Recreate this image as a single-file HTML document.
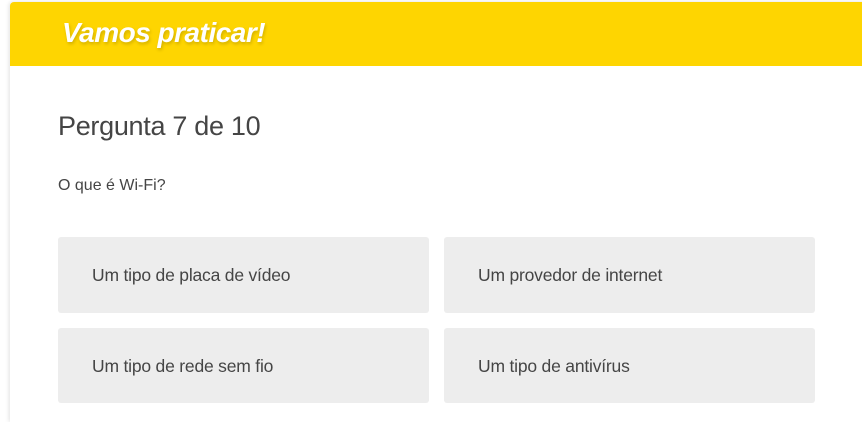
<!DOCTYPE html>
<html><head><meta charset="utf-8"><style>
html,body{margin:0;padding:0;background:#fff;width:862px;height:413px;overflow:hidden;font-family:"Liberation Sans",sans-serif;}
.card{position:absolute;left:10px;top:2px;width:860px;height:420px;background:#fff;border-radius:4px 0 0 0;box-shadow:-1px 0 4px rgba(0,0,0,0.12);overflow:hidden;}
.hdr{height:64px;background:#fed501;position:relative;}
.hdr span{position:absolute;left:52px;top:15px;font-size:28px;font-weight:bold;font-style:italic;color:#fff;text-shadow:1px 2px 3px rgba(0,0,0,0.18);letter-spacing:-0.5px;}
.q{position:absolute;left:48px;top:109px;font-size:27px;color:#454545;letter-spacing:-0.3px;}
.s{position:absolute;left:48px;top:175px;font-size:16px;color:#454545;}
.o{position:absolute;width:371px;height:76px;background:#ededed;border-radius:3px;}
.o span{position:absolute;left:34px;top:28px;font-size:17.5px;color:#454545;letter-spacing:-0.2px;}
</style></head><body>
<div class="card">
<div class="hdr"><span>Vamos praticar!</span></div>
<div class="q">Pergunta 7 de 10</div>
<div class="s">O que é Wi-Fi?</div>
<div class="o" style="left:48px;top:235px"><span>Um tipo de placa de vídeo</span></div>
<div class="o" style="left:434px;top:235px"><span>Um provedor de internet</span></div>
<div class="o" style="left:48px;top:326px;height:75px"><span>Um tipo de rede sem fio</span></div>
<div class="o" style="left:434px;top:326px;height:75px"><span>Um tipo de antivírus</span></div>
</div>
</body></html>
